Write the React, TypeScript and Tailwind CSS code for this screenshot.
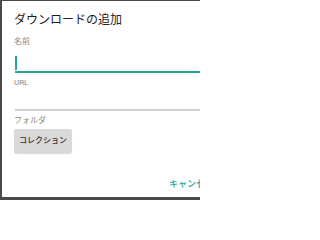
export default function App() {
  return (
    <div className="h-[200px] w-[200px] overflow-hidden bg-[#4a4a4a] pl-[2px] pt-px pb-[3px]">
      <div
        className="flex h-full flex-col bg-white pl-[12px]"
        style={{ fontFamily: '"Roboto", "Noto Sans CJK JP", sans-serif' }}
      >
        <div className="mt-[10px] text-[12px] leading-[18px] text-[#212121]">ダウンロードの追加</div>
        <div className="mt-[8px] text-[8px] leading-[10px] text-[#888888]">名前</div>
        <div className="mt-[8px] ml-px flex h-[18px] items-stretch border-b-2 border-[#26a69a]">
          <span className="mt-px h-[14px] w-[2px] bg-[#26a69a]" />
        </div>
        <div className="mt-[5px] text-[8px] leading-[10px] text-[#888888]">URL</div>
        <div className="mt-[21px] ml-px h-[2px] bg-[#d0d0d0]" />
        <div className="mt-[5px] text-[8px] leading-[10px] text-[#888888]">フォルダ</div>
        <div className="mt-0">
          <button className="h-[24px] rounded-[2px] bg-[#d9d9d9] px-[5px] text-[8px] font-medium text-[#333333] shadow-[0_1px_1px_rgba(0,0,0,0.15)]">
            コレクション
          </button>
        </div>
        <div className="mt-[25px] flex justify-end overflow-hidden">
          <span className="-mr-[14px] whitespace-nowrap text-[9px] font-medium text-[#26a69a]">キャンセル</span>
        </div>
      </div>
    </div>
  );
}
